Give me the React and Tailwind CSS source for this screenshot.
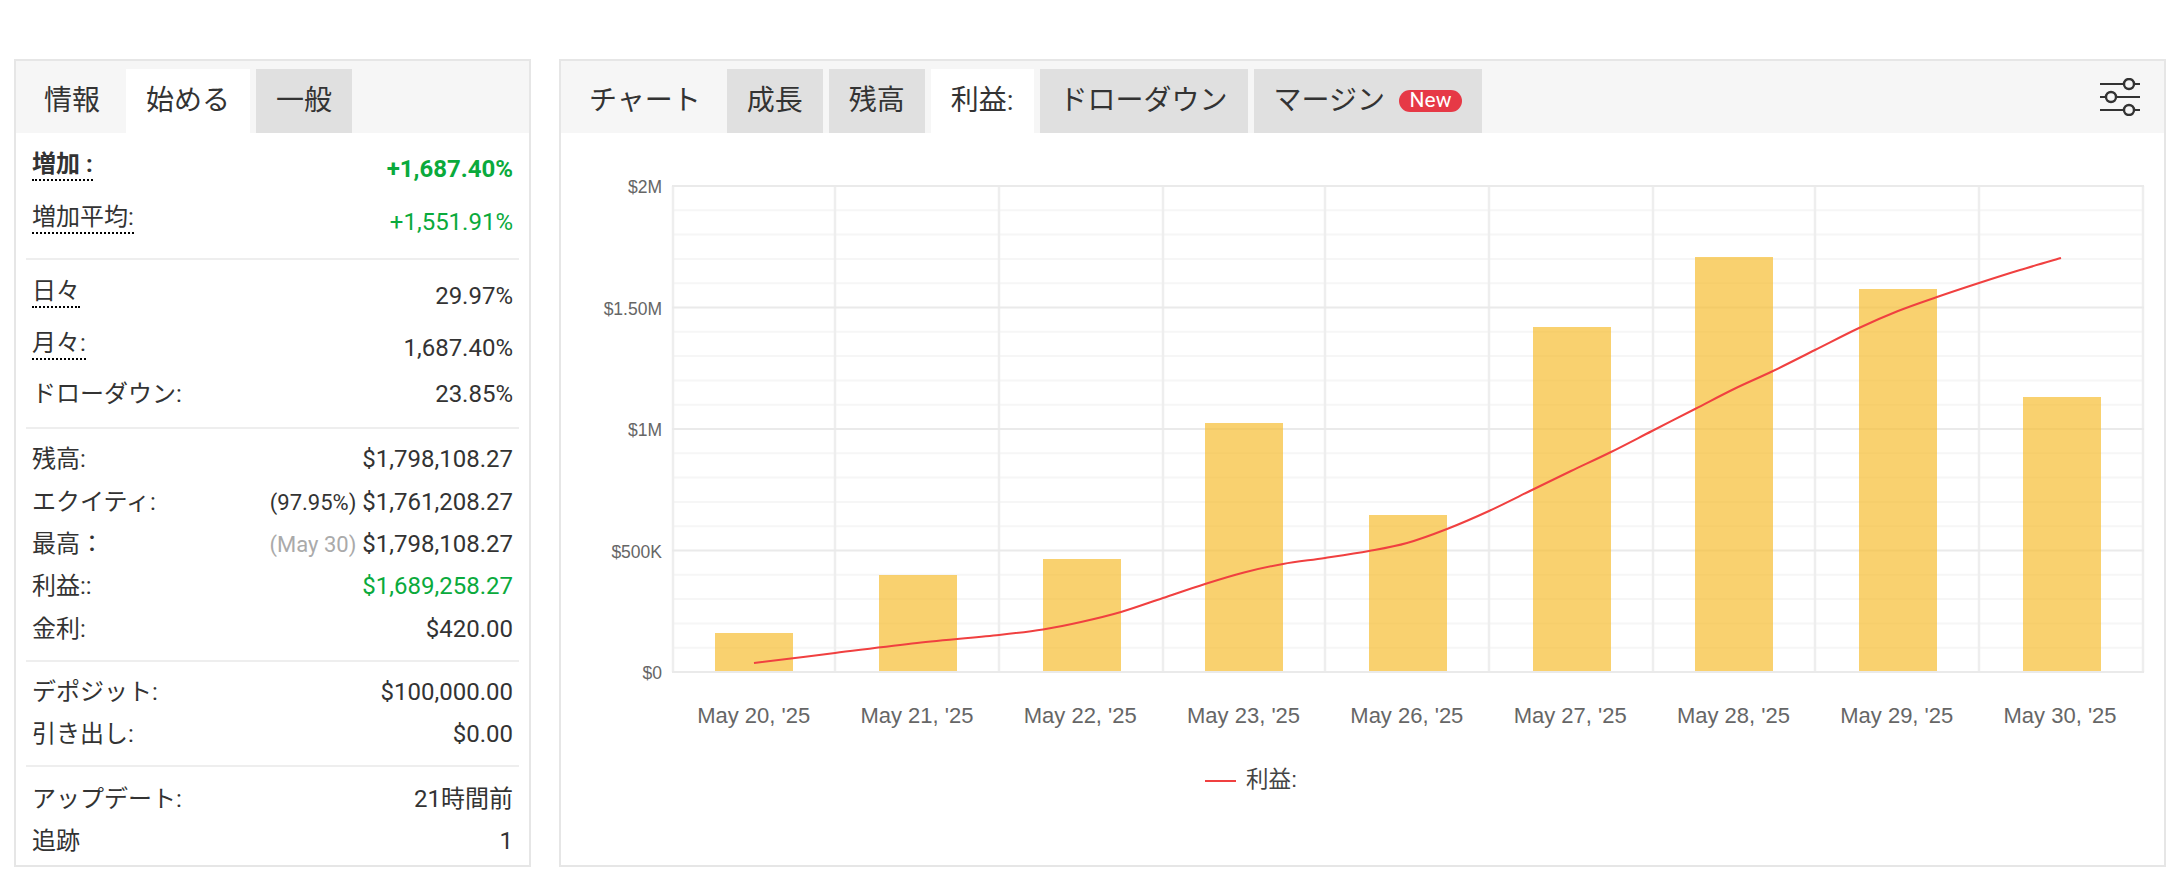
import React from "react";

const dates = ["May 20, '25", "May 21, '25", "May 22, '25", "May 23, '25", "May 26, '25", "May 27, '25", "May 28, '25", "May 29, '25", "May 30, '25"];
const bars = [[715, 633], [879, 575], [1043, 559], [1205, 423], [1369, 515], [1533, 327], [1695, 257], [1859, 289], [2023, 397]];
const gridX = [673, 835, 999, 1163, 1325, 1489, 1653, 1815, 1979, 2143];
const linePoints = [
  [754, 663], [835, 653], [917, 643], [999, 635], [1043, 629.5], [1081, 622], [1121, 612], [1163, 598], [1205, 584], [1244, 572.5],
  [1283, 564], [1325, 558], [1369, 551], [1407, 543], [1447, 529], [1489, 511], [1533, 489.5], [1571, 471], [1611, 452], [1652, 431],
  [1695, 409], [1734, 389], [1773, 371], [1815, 350], [1859, 328], [1898, 311], [1937, 297], [1979, 283], [2020, 270], [2061, 258],
];

function smoothPath(pts) {
  let d = `M${pts[0][0]} ${pts[0][1]}`;
  for (let i = 0; i < pts.length - 1; i++) {
    const p0 = pts[i - 1] || pts[i];
    const p1 = pts[i];
    const p2 = pts[i + 1];
    const p3 = pts[i + 2] || p2;
    d += ` C${p1[0] + (p2[0] - p0[0]) / 6} ${p1[1] + (p2[1] - p0[1]) / 6} ${p2[0] - (p3[0] - p1[0]) / 6} ${p2[1] - (p3[1] - p1[1]) / 6} ${p2[0]} ${p2[1]}`;
  }
  return d;
}

function Tab({ children, active, plain }) {
  const look = active ? "bg-white" : plain ? "" : "bg-[#e0e0e0]";
  return <div className={`flex h-[64px] items-center whitespace-nowrap px-[20px] text-[28px] text-[#333] ${look}`}>{children}</div>;
}

function Row({ label, value, dotted, bold, green, note, noteGray, h = "h-[42.3px]" }) {
  return (
    <div className={`flex items-center justify-between pr-[6px] pl-[6px] ${h} ${bold ? "font-bold" : ""}`}>
      {dotted ? (
        <span className="mb-[8px] border-b-2 border-dotted border-black leading-[30px]">{label}</span>
      ) : (
        <span>{label}</span>
      )}
      <span className={green ? "text-[#0aaa3c]" : ""}>
        {note && <span className={`mr-[6px] text-[22px] ${noteGray ? "text-[#aaa]" : ""}`}>{note}</span>}
        {value}
      </span>
    </div>
  );
}

function Group({ children, space = "pt-[9px] pb-[10px]", last }) {
  return <div className={`mx-[10px] ${space} ${last ? "" : "border-b-2 border-[#eee]"}`}>{children}</div>;
}

function SliderIcon() {
  return (
    <svg width={40} height={38} viewBox="0 0 40 38" className="mr-[24px] ml-auto self-center" fill="none" stroke="#333" strokeWidth={2}>
      <path d="M0 6h40M0 19h40M0 32h40" />
      <circle cx={29} cy={6} r={5} fill="#f6f6f6" strokeWidth={2.4} />
      <circle cx={11} cy={19} r={5} fill="#f6f6f6" strokeWidth={2.4} />
      <circle cx={29} cy={32} r={5} fill="#f6f6f6" strokeWidth={2.4} />
    </svg>
  );
}

function Chart() {
  const left = 673;
  const right = 2143;
  const top = 186;
  const bottom = 672;
  const rowStep = (bottom - top) / 20;
  const rows = Array.from({ length: 21 }, (_, i) => i);
  const yLabels = ["$2M", "$1.50M", "$1M", "$500K", "$0"];
  return (
    <svg width={1603} height={732} viewBox="561 133 1603 732" className="[font-family:'Liberation_Sans','Noto_Sans_CJK_JP',sans-serif]">
      {rows.filter((i) => i % 5 !== 0).map((i) => (
        <line key={i} x1={left} x2={right} y1={top + i * rowStep} y2={top + i * rowStep} stroke="#f6f6f6" strokeWidth={2} />
      ))}
      {gridX.map((x) => (
        <line key={x} x1={x} x2={x} y1={top} y2={bottom} stroke="#eeeeee" strokeWidth={2.5} />
      ))}
      {rows.filter((i) => i % 5 === 0).map((i) => (
        <line key={i} x1={left - 1} x2={right + 1} y1={top + i * rowStep} y2={top + i * rowStep} stroke="#eaeaea" strokeWidth={2} />
      ))}
      {bars.map(([x, t]) => (
        <rect key={x} x={x} y={t} width={78} height={bottom - 1 - t} fill="rgba(247,190,50,0.7)" />
      ))}
      <path d={smoothPath(linePoints)} fill="none" stroke="#f04040" strokeWidth={2} />
      {yLabels.map((l, i) => (
        <text key={l} x={662} y={top + i * 5 * rowStep + 7} textAnchor="end" fontSize={17.5} fill="#666">{l}</text>
      ))}
      {dates.map((d, i) => (
        <text key={d} x={672 + 163.3 * (i + 0.5)} y={723} textAnchor="middle" fontSize={22} fill="#666">{d}</text>
      ))}
      <line x1={1205} x2={1236} y1={781} y2={781} stroke="#f04040" strokeWidth={2} />
      <text x={1246} y={787} fontSize={22.5} fill="#444">利益:</text>
    </svg>
  );
}

export default function App() {
  return (
    <div className="flex h-[886px] w-[2182px] gap-[28px] bg-white pt-[59px] pl-[14px] [font-family:Roboto,'Noto_Sans_CJK_JP',sans-serif] text-[#333]">
      <div className="h-[808px] w-[517px] border-2 border-[#e6e6e6] text-[24px]">
        <div className="flex h-[72px] items-end gap-[6px] bg-[#f6f6f6] pl-[8px]">
          <Tab plain>情報</Tab>
          <Tab active>始める</Tab>
          <Tab>一般</Tab>
        </div>
        <Group>
          <Row label="増加 :" value="+1,687.40%" dotted bold green h="h-[53px]" />
          <Row label="増加平均:" value="+1,551.91%" dotted green h="h-[53px]" />
        </Group>
        <Group space="pt-[10px] pb-[12px]">
          <Row label="日々" value="29.97%" dotted h="h-[52px]" />
          <Row label="月々:" value="1,687.40%" dotted h="h-[51px]" />
          <Row label="ドローダウン:" value="23.85%" />
        </Group>
        <Group>
          <Row label="残高:" value="$1,798,108.27" />
          <Row label="エクイティ:" value="$1,761,208.27" note="(97.95%)" />
          <Row label="最高：" value="$1,798,108.27" note="(May 30)" noteGray />
          <Row label="利益::" value="$1,689,258.27" green />
          <Row label="金利:" value="$420.00" />
        </Group>
        <Group>
          <Row label="デポジット:" value="$100,000.00" />
          <Row label="引き出し:" value="$0.00" />
        </Group>
        <Group last space="pt-[10px]">
          <Row label="アップデート:" value="21時間前" />
          <Row label="追跡" value="1" />
        </Group>
      </div>
      <div className="h-[808px] w-[1607px] border-2 border-[#e6e6e6]">
        <div className="flex h-[72px] items-end gap-[6px] bg-[#f6f6f6] pl-[8px]">
          <Tab plain>チャート</Tab>
          <Tab>成長</Tab>
          <Tab>残高</Tab>
          <Tab active>利益:</Tab>
          <Tab>ドローダウン</Tab>
          <Tab>
            マージン
            <span className="ml-[14px] flex h-[22px] w-[63px] items-center justify-center rounded-full bg-[#e63946] text-[21px] text-white">New</span>
          </Tab>
          <SliderIcon />
        </div>
        <Chart />
      </div>
    </div>
  );
}
